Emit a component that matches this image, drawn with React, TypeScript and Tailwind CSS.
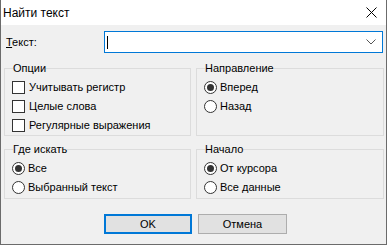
import type { ReactNode } from 'react';

const font = { fontFamily: '"Liberation Sans", Arial, sans-serif' };

function Check({ label }: { label: string }) {
  return (
    <div className="flex items-center h-[19px]">
      <span className="w-[13px] h-[13px] border border-[#333] bg-white" />
      <span className="ml-[4px] text-[11px] text-black">{label}</span>
    </div>
  );
}

function Radio({ label, on }: { label: string; on?: boolean }) {
  return (
    <div className="flex items-center h-[19px]">
      <span className="w-[13px] h-[13px] rounded-full border border-[#333] bg-white flex items-center justify-center">
        {on && <span className="w-[7px] h-[7px] rounded-full bg-[#333]" />}
      </span>
      <span className="ml-[3px] text-[11px] text-black">{label}</span>
    </div>
  );
}

function Group({ title, children, className }: { title: string; children: ReactNode; className?: string }) {
  return (
    <fieldset className={`border border-[#dcdcdc] px-[7px] ${className ?? ''}`}>
      <legend className="text-[11px] leading-[13px] px-0 ml-[1px] text-black">{title}</legend>
      {children}
    </fieldset>
  );
}

export default function App() {
  return (
    <div
      style={font}
      className="w-[387px] h-[245px] bg-[#f0f0f0] border-l border-r border-b border-[#6b6b6b] flex flex-col"
    >
      <div className="h-[25px] bg-white flex items-center justify-between pl-[2px] pr-[9px]">
        <span className="text-[12px] text-black">Найти текст</span>
        <svg width="11" height="11" viewBox="0 0 11 11">
          <path d="M0.5 0.5 L10.5 10.5 M10.5 0.5 L0.5 10.5" stroke="#000" strokeWidth="1" />
        </svg>
      </div>

      <div className="pl-[3px] pr-[3px] flex flex-col">
        <div className="flex items-center mt-[6px] h-[22px]">
          <span className="w-[100px] pl-[2px] text-[11px] text-black">
            <span className="underline">Т</span>екст:
          </span>
          <div className="flex-1 h-[22px] bg-white border border-[#0078d7] flex items-center justify-between pl-[2px] pr-[6px]">
            <span className="w-[1px] h-[13px] bg-black" />
            <svg width="10" height="6" viewBox="0 0 10 6">
              <path d="M0.5 0.5 L5 5 L9.5 0.5" stroke="#555" strokeWidth="1" fill="none" />
            </svg>
          </div>
        </div>

        <div className="grid grid-cols-[187px_188px] gap-x-[5px] mt-[9px]">
          <Group title="Опции" className="h-[74px] pt-[3px]">
            <Check label="Учитывать регистр" />
            <Check label="Целые слова" />
            <Check label="Регулярные выражения" />
          </Group>
          <Group title="Направление" className="h-[74px] pt-[3px]">
            <Radio label="Вперед" on />
            <Radio label="Назад" />
          </Group>
          <Group title="Где искать" className="h-[56px] pt-[3px] mt-[7px]">
            <Radio label="Все" on />
            <Radio label="Выбранный текст" />
          </Group>
          <Group title="Начало" className="h-[56px] pt-[3px] mt-[7px]">
            <Radio label="От курсора" on />
            <Radio label="Все данные" />
          </Group>
        </div>

        <div className="flex justify-center gap-[6px] mt-[15px] pl-[4px]">
          <button className="w-[88px] h-[20px] bg-[#e1e1e1] border-2 border-[#0078d7] text-[11px] text-black">
            OK
          </button>
          <button className="w-[89px] h-[20px] bg-[#e1e1e1] border border-[#adadad] text-[11px] text-black">
            Отмена
          </button>
        </div>
      </div>
    </div>
  );
}
